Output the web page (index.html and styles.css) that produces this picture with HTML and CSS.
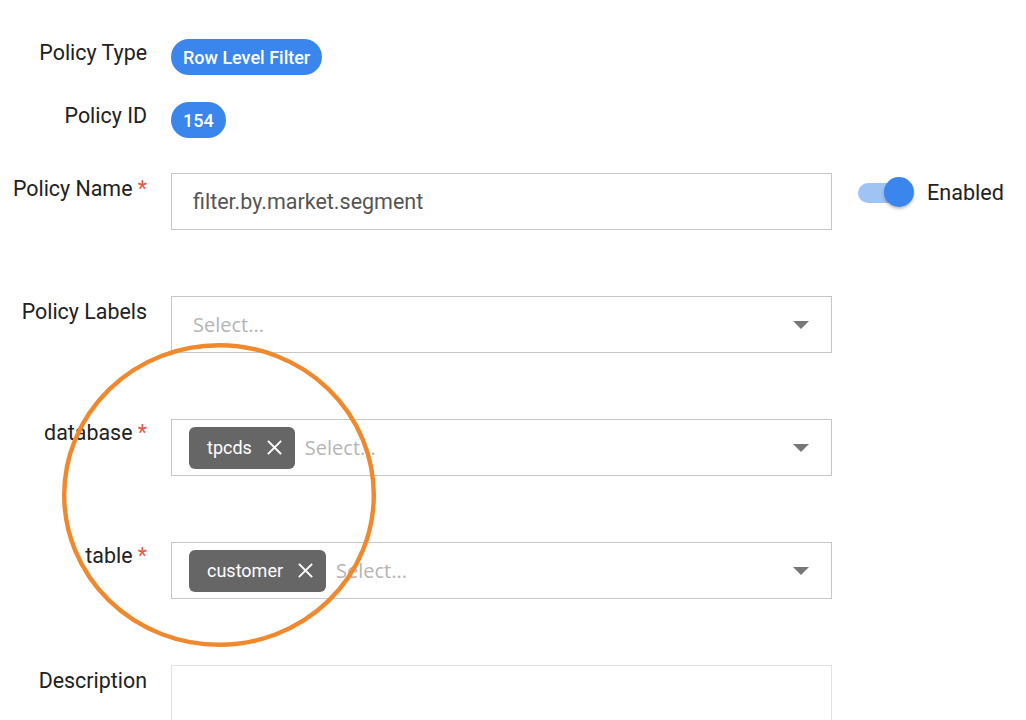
FILE: index.html
```html
<!DOCTYPE html>
<html lang="en">
<head>
<meta charset="utf-8">
<title>Row Level Filter Policy</title>
<link rel="stylesheet" href="styles.css">
</head>
<body>
<div class="page">
  <form class="policy-form">
    <div class="row row-first">
      <div class="label label-pill">Policy Type</div>
      <div class="field"><span class="pill">Row Level Filter</span></div>
    </div>
    <div class="row row-id">
      <div class="label label-pill">Policy ID</div>
      <div class="field"><span class="pill">154</span></div>
    </div>
    <div class="row row-name">
      <div class="label">Policy Name <span class="req">*</span></div>
      <div class="field"><div class="input">filter.by.market.segment</div></div>
      <div class="toggle">
        <span class="switch"><span class="track"></span><span class="knob"></span></span>
        <span class="toggle-text">Enabled</span>
      </div>
    </div>
    <div class="row row-gap">
      <div class="label">Policy Labels</div>
      <div class="field">
        <div class="select">
          <span class="placeholder">Select...</span>
          <span class="caret"></span>
        </div>
      </div>
    </div>
    <div class="row row-gap">
      <div class="label label-res">database <span class="req">*</span></div>
      <div class="field">
        <div class="select select-tags">
          <span class="tag">tpcds
            <svg class="tag-x" viewBox="0 0 15 15" width="15" height="15"><path d="M1.5 1.5 L13.5 13.5 M13.5 1.5 L1.5 13.5" stroke="#fff" stroke-width="1.8" fill="none" stroke-linecap="square"/></svg>
          </span>
          <span class="placeholder">Select...</span>
          <span class="caret"></span>
        </div>
      </div>
    </div>
    <div class="row row-gap">
      <div class="label label-res">table <span class="req">*</span></div>
      <div class="field">
        <div class="select select-tags">
          <span class="tag">customer
            <svg class="tag-x" viewBox="0 0 15 15" width="15" height="15"><path d="M1.5 1.5 L13.5 13.5 M13.5 1.5 L1.5 13.5" stroke="#fff" stroke-width="1.8" fill="none" stroke-linecap="square"/></svg>
          </span>
          <span class="placeholder">Select...</span>
          <span class="caret"></span>
        </div>
      </div>
    </div>
    <div class="row row-gap">
      <div class="label">Description</div>
      <div class="field"><div class="textarea"></div></div>
    </div>
  </form>
  <svg class="annotation" width="314" height="304" viewBox="0 0 314 304">
    <ellipse cx="157" cy="152" rx="154.8" ry="149.8" fill="none" stroke="#f0892d" stroke-width="4.4"/>
  </svg>
</div>
</body>
</html>
```
FILE: styles.css
```css
html, body {
  margin: 0;
  padding: 0;
  background: #ffffff;
}

body {
  font-family: Roboto, "Liberation Sans", Arial, sans-serif;
  color: #212121;
  overflow: hidden;
}

.page {
  position: relative;
  width: 1026px;
  height: 720px;
  overflow: hidden;
}

.policy-form {
  padding-top: 39px;
}

.row {
  display: grid;
  grid-template-columns: 147px 661px auto;
  column-gap: 24px;
  align-items: start;
}

.row-id {
  margin-top: 27px;
}

.row-name {
  margin-top: 35px;
}

.row-gap {
  margin-top: 66px;
}

.label {
  text-align: right;
  font-size: 21.4px;
  line-height: 28px;
  padding-top: 2px;
  white-space: nowrap;
}

.label-pill,
.label-res {
  padding-top: 0;
}

.req {
  color: #e5553f;
}

.pill {
  display: inline-flex;
  align-items: center;
  height: 36px;
  padding: 0 12px;
  border-radius: 18px;
  background: #3b86ec;
  color: #ffffff;
  font-size: 18px;
  font-weight: 500;
  box-sizing: border-box;
}

.input,
.select {
  box-sizing: border-box;
  height: 57px;
  border: 1px solid #c6c6c6;
  background: #fff;
  display: flex;
  align-items: center;
}

.input {
  padding-left: 21px;
  font-size: 21.5px;
  color: #555555;
}

.select {
  padding-left: 21px;
  padding-right: 22px;
}

.select-tags {
  padding-left: 17px;
}

.placeholder {
  font-family: "Open Sans", "Noto Sans", sans-serif;
  font-size: 20px;
  color: #b5b5b5;
}

.caret {
  margin-left: auto;
  width: 0;
  height: 0;
  border-left: 8px solid transparent;
  border-right: 8px solid transparent;
  border-top: 8px solid #777777;
}

.tag {
  display: inline-flex;
  align-items: center;
  height: 42px;
  padding: 0 13px 0 18px;
  margin-right: 10px;
  border-radius: 6px;
  background: #666666;
  color: #ffffff;
  font-size: 18px;
  font-weight: 400;
  box-sizing: border-box;
}

.tag-x {
  margin-left: 15px;
  display: block;
}

.toggle {
  display: flex;
  align-items: center;
  height: 30px;
  margin-top: 4px;
  margin-left: 2px;
}

.switch {
  position: relative;
  width: 56px;
  height: 30px;
  display: block;
}

.track {
  position: absolute;
  left: 0;
  top: 6px;
  width: 48px;
  height: 20px;
  border-radius: 10px;
  background: #9fc3f5;
}

.knob {
  position: absolute;
  left: 26px;
  top: 0;
  width: 30px;
  height: 30px;
  border-radius: 50%;
  background: #3b86ec;
  box-shadow: 0 2px 3px rgba(0, 0, 0, 0.25);
}

.toggle-text {
  margin-left: 13px;
  font-size: 21.6px;
  color: #212121;
}

.textarea {
  box-sizing: border-box;
  height: 120px;
  border: 1px solid #e2e2e2;
}

.annotation {
  position: absolute;
  left: 62px;
  top: 343px;
}
```
